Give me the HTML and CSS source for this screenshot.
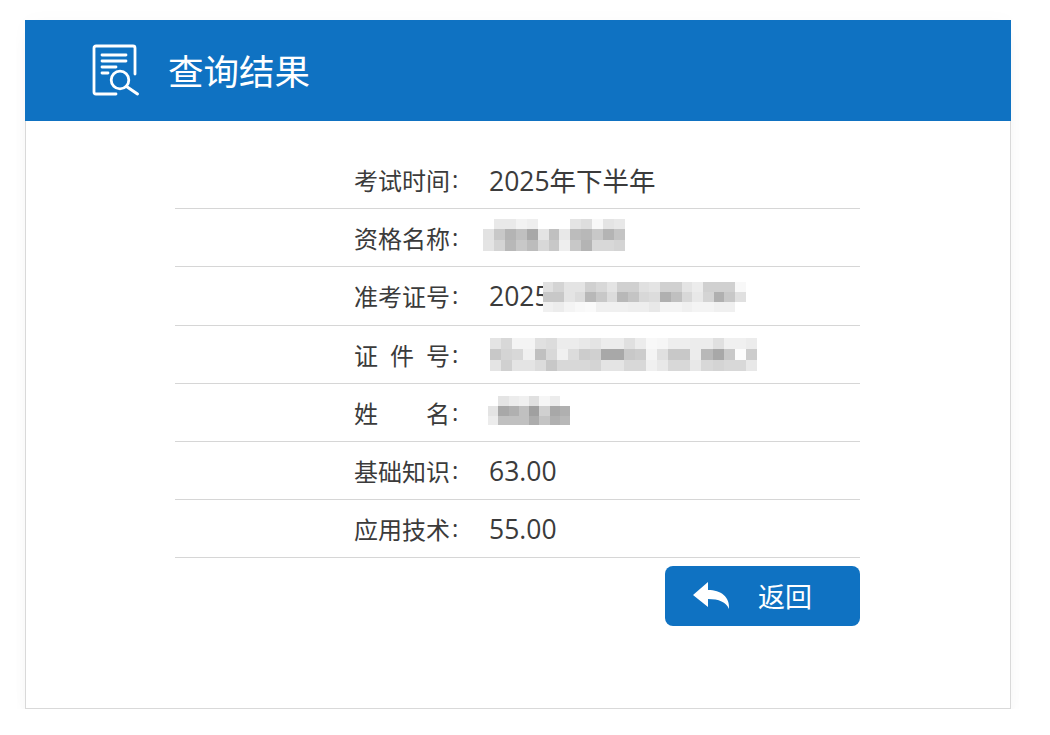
FILE: index.html
```html
<!DOCTYPE html>
<html lang="zh-CN">
<head>
  <meta charset="UTF-8" />
  <meta name="viewport" content="width=device-width, initial-scale=1.0" />
  <title>查询结果</title>
  <link rel="stylesheet" href="styles.css">
</head>
<body>

  <div class="card">
    <div class="card-head">
      <svg class="head-icon" width="48" height="53" viewBox="0 0 48 53" fill="none" stroke="#fff" stroke-linecap="round" stroke-linejoin="round">
        <path d="M24 50H4a2 2 0 0 1-2-2V4a2 2 0 0 1 2-2h37a2 2 0 0 1 2 2v26" stroke-width="2.8"/>
        <path d="M10 11h24M10 17h24" stroke-width="2.8"/>
        <path d="M10 23h14M10 29h6" stroke-width="2.8"/>
        <circle cx="28" cy="36" r="8.8" stroke-width="2.8"/>
        <path d="M34.5 42.5L45.5 50" stroke-width="3"/>
      </svg>
      <span class="head-title">查询结果</span>
    </div>

    <div class="card-body">
      <div class="result">
        <div class="row">
          <span class="label"><span class="label-text">考试时间</span>:</span>
          <span class="value">2025年下半年</span>
        </div>
        <div class="row">
          <span class="label"><span class="label-text">资格名称</span>:</span>
          <span class="value"><span class="mosaic mosaic-name" data-cells="ff e9 e9 f2 ee ff ff ff e4 de f8 e4 e8|e2 c8 b4 c0 a8 e4 c0 e8 bc b8 c8 b4 c4|e4 d4 b8 c8 bc d8 c8 ee c8 b4 d8 d8 d4"></span></span>
        </div>
        <div class="row">
          <span class="label"><span class="label-text">准考证号</span>:</span>
          <span class="value">2025<span class="mosaic mosaic-ticket" data-cells="e0 d4 e4 e4 d0 d8 e4 d0 d0 e0 e4 d0 d0 e4 ec d0 d0 d0 f8|c8 c8 e4 dc b8 c8 dc b8 c4 d8 dc b0 c0 d8 e8 d4 b0 c8 e0|f0 ec f4 f8 fa f0 f0 f0 ee ee e8 f4 f4 f0 f4 f4 f0 f0 ff"></span></span>
        </div>
        <div class="row">
          <span class="label"><span class="label-text">证 件 号</span>:</span>
          <span class="value"><span class="mosaic mosaic-cert" data-cells="e4 d8 f4 f4 e0 dc ec ec e8 e4 ec ec e0 ec f8 f6 ee ee ec ec e0 f0 f0 ec|c8 d4 d8 f0 c0 d8 f0 dc cc d0 a8 a8 c8 cc f4 e0 c8 c8 ec b8 a8 c8 fc cc|e4 d0 e4 e4 dc c8 d8 d8 d8 d4 e4 e4 d8 d8 f0 e8 d8 d8 e8 d8 d4 d8 d8 e8"></span></span>
        </div>
        <div class="row">
          <span class="label"><span class="label-text">姓 名</span>:</span>
          <span class="value"><span class="mosaic mosaic-person" data-cells="ff e4 ec f0 e0 f6 ec ff|e4 a8 b0 c0 a0 d0 a8 b0|ec c0 c0 c0 ac c4 b0 b8"></span></span>
        </div>
        <div class="row">
          <span class="label"><span class="label-text">基础知识</span>:</span>
          <span class="value">63.00</span>
        </div>
        <div class="row">
          <span class="label"><span class="label-text">应用技术</span>:</span>
          <span class="value">55.00</span>
        </div>
      </div>

      <button class="back-btn">
        <svg width="38" height="28" viewBox="0 0 38 28" fill="#fff">
          <path d="M1 14L16 1v8c13 0 22 7 21 19-3-7-10-10-21-10v8z"/>
        </svg>
        返回
      </button>
    </div>
  </div>

  <script src="script.js"></script>
</body>
</html>
```

FILE: styles.css
```css
* { margin: 0; padding: 0; box-sizing: border-box; }
body {
  font-family: "Open Sans", "Noto Sans CJK SC", sans-serif;
  background: #fff;
  color: #3b3b3b;
  padding: 20px 39px 0 25px;
}
.card {
  height: 689px;
  background: #fff;
  border: 1px solid #d9d9d9;
  border-top: none;
  box-shadow: 0 14px 16px -4px rgba(0,0,0,0.05), 0 0 20px rgba(0,0,0,0.02);
}
.card-head {
  display: flex;
  align-items: center;
  gap: 28px;
  height: 101px;
  margin: 0 -1px;
  padding-left: 67px;
  background: #0f72c2;
  color: #fff;
}
.head-title {
  font-size: 35.5px;
  margin-bottom: 2px;
}
.card-body {
  display: flex;
  flex-direction: column;
  padding: 30px 150px 0 149px;
}
.row {
  display: flex;
  align-items: center;
  height: 58.2px;
  padding-left: 179px;
  border-bottom: 1px solid #d6d6d6;
}
.label {
  display: flex;
  width: 135px;
  font-size: 24px;
}
.label-text {
  width: 96px;
  margin-right: 2px;
  text-align-last: justify;
}
.value {
  display: flex;
  align-items: center;
  font-size: 26.5px;
}
.mosaic {
  display: grid;
  height: 32px;
}
.mosaic-name { width: 142px; margin: -6px 0 0 -6px; }
.mosaic-ticket { width: 203px; height: 30px; margin-top: 3px; margin-left: -7px; }
.mosaic-cert { width: 267px; height: 33px; margin-left: 1px; }
.mosaic-person { width: 82px; height: 29px; margin: -3px 0 0 -1px; }
.back-btn {
  display: flex;
  align-items: center;
  gap: 28px;
  align-self: flex-end;
  width: 195px;
  height: 60px;
  margin-top: 8px;
  padding: 0 0 2px 27px;
  border: none;
  border-radius: 8px;
  background: #0f72c2;
  color: #fff;
  font-family: inherit;
  font-size: 27px;
}
```

FILE: script.js
```js
// redacted values are drawn as blocks of grey, one hex level per cell
document.querySelectorAll(".mosaic").forEach(el => {
  const rows = el.getAttribute("data-cells").split("|").map(r => r.split(" "));
  el.style.gridTemplateColumns = "repeat(" + rows[0].length + ", 1fr)";
  rows.forEach(row => {
    row.forEach(level => {
      const cell = document.createElement("span");
      cell.style.background = "#" + level + level + level;
      el.appendChild(cell);
    });
  });
});
```
